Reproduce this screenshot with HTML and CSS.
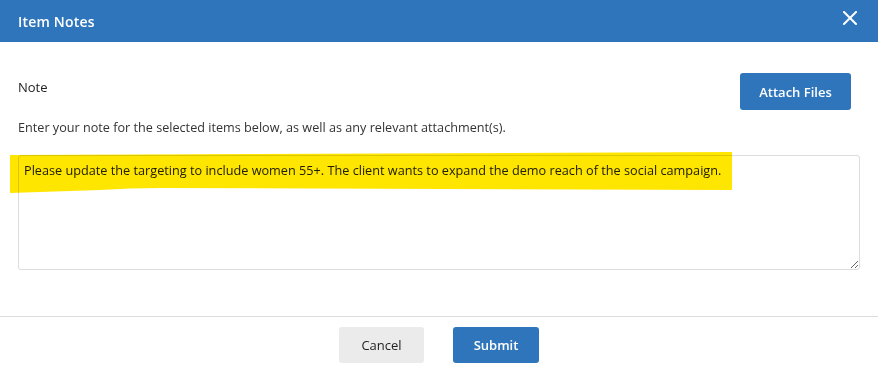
FILE: index.html
```html
<!DOCTYPE html>
<html>
<head>
<meta charset="utf-8">
<link rel="stylesheet" href="styles.css">
</head>
<body>
<div class="modal">
  <header class="modal-header">
    <h1 class="modal-title">Item Notes</h1>
    <button class="close-btn" aria-label="Close">
      <svg width="14" height="14" viewBox="0 0 14 14"><path d="M1 1L13 13M13 1L1 13" stroke="#fff" stroke-width="2" stroke-linecap="square"/></svg>
    </button>
  </header>
  <section class="modal-body">
    <div class="note-row">
      <div class="note-info">
        <div class="note-label">Note</div>
        <p class="note-desc">Enter your note for the selected items below, as well as any relevant attachment(s).</p>
      </div>
      <button class="btn btn-primary attach">Attach Files</button>
    </div>
    <div class="note-field">
      <textarea class="note-input">Please update the targeting to include women 55+. The client wants to expand the demo reach of the social campaign.</textarea>
      <svg class="highlight" width="724" height="42" viewBox="0 0 724 42" preserveAspectRatio="none"><path d="M0 3 L722 0 L722 38 L150 36 Q120 36 90 38 L0 41 Z" fill="#ffe600"/></svg>
    </div>
  </section>
  <footer class="modal-footer">
    <button class="btn btn-light cancel">Cancel</button>
    <button class="btn btn-primary submit">Submit</button>
  </footer>
</div>
</body>
</html>
```
FILE: styles.css
```css
* { box-sizing: border-box; }
html, body { margin: 0; padding: 0; background: #fff; }
body { font-family: "Open Sans", "Noto Sans", sans-serif; color: #222; }
.modal { width: 878px; height: 371px; display: flex; flex-direction: column; }
.modal-header {
  height: 42px; background: #2e75bb; display: flex; align-items: center;
  justify-content: space-between; padding: 0 21px 0 18px;
}
.modal-title { margin: 0; font-size: 14px; font-weight: 600; color: #fff; letter-spacing: 0.2px; }
.close-btn { background: none; border: 0; padding: 0; width: 14px; height: 14px; display: flex; cursor: pointer; margin-top: -6px; }
.modal-body { padding: 31px 18px 0 18px; height: 275px; border-bottom: 1px solid #dcdcdc; }
.note-row { display: flex; justify-content: space-between; align-items: flex-start; }
.note-info { padding-top: 5px; }
.note-label { font-size: 13px; font-weight: 500; color: #222; line-height: 18px; }
.note-desc { margin: 22px 0 0; font-size: 12.65px; color: #333; line-height: 18px; }
.btn {
  font-family: inherit; font-size: 13px; font-weight: 600; border: 0; border-radius: 3px;
  cursor: pointer; display: flex; align-items: center; justify-content: center;
}
.btn-primary { background: #2e75bb; color: #fff; }
.btn-light { background: #ebebeb; color: #222; font-weight: 500; }
.attach { width: 111px; height: 37px; margin-right: 9px; }
.note-field { position: relative; margin-top: 19px; }
.note-input {
  display: block; width: 842px; height: 115px; border: 1px solid #dcdcdc; border-radius: 3px;
  font-family: inherit; font-size: 12.7px; color: #222; padding: 5px 5px; line-height: 18px; resize: both;
  background: transparent; position: relative; z-index: 1; outline: none;
}
.highlight { position: absolute; left: -8px; top: -3px; z-index: 2; mix-blend-mode: multiply; pointer-events: none; }
.modal-footer { flex: 1; display: flex; justify-content: center; align-items: flex-start; gap: 29px; padding-top: 10px; }
.modal-footer .btn { height: 36px; }
.cancel { width: 85px; }
.submit { width: 86px; }
```
